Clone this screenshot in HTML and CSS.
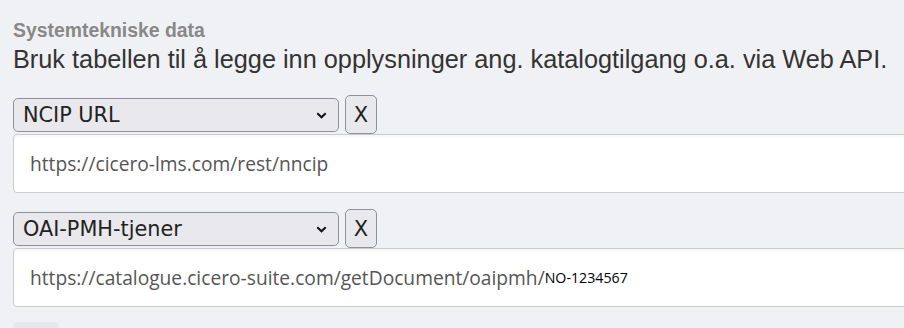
FILE: index.html
```html
<!DOCTYPE html>
<html>
<head>
<title>Systemtekniske data</title>
<link rel="stylesheet" href="styles.css">
</head>
<body>
<div class="section">
<div class="section-label">Systemtekniske data</div>
<p class="section-intro">Bruk tabellen til å legge inn opplysninger ang. katalogtilgang o.a. via Web API.</p>

<div class="entry">
<div class="entry-head">
<div class="select-wrap">
<select class="entry-type">
<option selected>NCIP URL</option>
<option>OAI-PMH-tjener</option>
<option>Z39.50-tjener</option>
</select>
<svg class="chevron" width="11" height="7" viewBox="0 0 11 7"><path d="M1.3 1.3 L5.5 5.3 L9.7 1.3" fill="none" stroke="#111" stroke-width="2"/></svg>
</div>
<button class="entry-remove">X</button>
</div>
<div class="entry-value">https://cicero-lms.com/rest/nncip</div>
</div>

<div class="entry">
<div class="entry-head">
<div class="select-wrap">
<select class="entry-type">
<option>NCIP URL</option>
<option selected>OAI-PMH-tjener</option>
<option>Z39.50-tjener</option>
</select>
<svg class="chevron" width="11" height="7" viewBox="0 0 11 7"><path d="M1.3 1.3 L5.5 5.3 L9.7 1.3" fill="none" stroke="#111" stroke-width="2"/></svg>
</div>
<button class="entry-remove">X</button>
</div>
<div class="entry-value">https://catalogue.cicero-suite.com/getDocument/oaipmh/<span class="entry-id">NO-1234567</span></div>
</div>

<div class="add-entry"></div>
</div>
</body>
</html>
```

FILE: styles.css
```css
body{
margin:0;
background-color:#f0f1f4;
font-family:"Liberation Sans",Arial,sans-serif;
overflow:hidden;
}
.section{
padding:19px 0 0 13px;
}
.section-label{
font-size:19.4px;
font-weight:bold;
color:#888;
line-height:22px;
}
.section-intro{
margin:3px 0 21px 0;
font-size:25.3px;
color:#333;
line-height:30px;
white-space:nowrap;
}
.entry + .entry{
margin-top:16px;
}
.entry-head{
display:flex;
align-items:center;
gap:6px;
height:39px;
}
.select-wrap{
position:relative;
}
.entry-type{
display:block;
appearance:none;
width:326px;
height:34px;
padding:0 0 0 9px;
background-color:#e9e9ed;
border:1px solid #8f8f9d;
border-radius:5px;
font-family:"DejaVu Sans",sans-serif;
font-size:20.8px;
color:#222;
}
.chevron{
position:absolute;
right:12px;
top:14px;
}
.entry-remove{
width:32px;
height:39px;
padding:0;
background-color:#e9e9ed;
border:1px solid #8f8f9d;
border-radius:5px;
font-family:"DejaVu Sans",sans-serif;
font-size:21px;
color:#222;
}
.entry-value{
width:910px;
height:57px;
box-sizing:content-box;
padding:0 16px;
display:flex;
align-items:center;
background-color:#fff;
border:1px solid #ccc;
border-radius:4px;
box-shadow:inset 0 2px 3px rgba(0,0,0,0.04);
font-family:"Open Sans",sans-serif;
font-size:19.2px;
color:#555;
white-space:nowrap;
}
.entry-id{
font-size:14.2px;
color:#000;
}
.add-entry{
margin-top:15px;
width:46px;
height:30px;
border-radius:5px;
background-color:#e6e7eb;
}
```
